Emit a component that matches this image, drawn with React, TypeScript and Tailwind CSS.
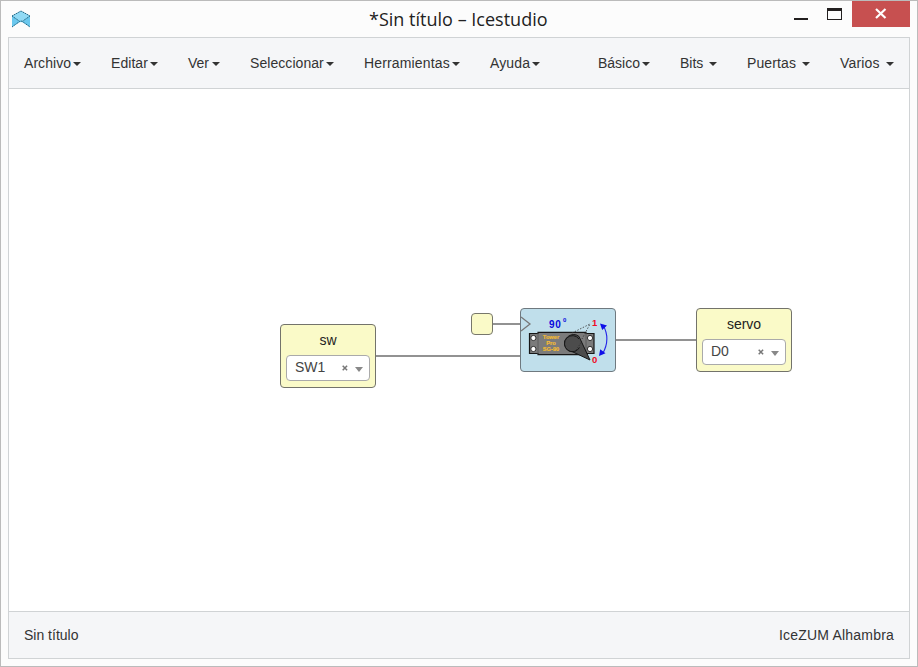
import React from "react";

type MenuEntry = { label: string; box: string; text: string };

const mainMenu: MenuEntry[] = [
  { label: "Archivo", box: "w-[57px]", text: "tracking-[0.05px]" },
  { label: "Editar", box: "w-[47px]", text: "tracking-[0.05px]" },
  { label: "Ver", box: "w-8", text: "tracking-normal" },
  { label: "Seleccionar", box: "w-[84px]", text: "tracking-[0.06px]" },
  { label: "Herramientas", box: "w-24", text: "tracking-[0.15px]" },
  { label: "Ayuda", box: "w-[50px]", text: "tracking-[0.12px]" },
];

const blockMenu: MenuEntry[] = [
  { label: "Básico", box: "w-[52px]", text: "tracking-normal" },
  { label: "Bits", box: "w-[37px]", text: "tracking-normal" },
  { label: "Puertas", box: "w-[63px]", text: "tracking-[0.12px]" },
  { label: "Varios", box: "w-[54px]", text: "tracking-[0.15px]" },
];

function Menu({ items }: { items: MenuEntry[] }) {
  return (
    <nav className="flex gap-[30px]">
      {items.map(({ label, box, text }) => (
        <button key={label} className={`flex h-5 items-center justify-between whitespace-nowrap ${box}`}>
          <span className={text}>{label}</span>
          <span className="mt-0.5 h-0 w-0 shrink-0 border-x-4 border-t-4 border-x-transparent border-t-[#333]" />
        </button>
      ))}
    </nav>
  );
}

function Logo() {
  return (
    <svg className="mt-[9px] h-[18px] w-5" viewBox="0 0 20 18">
      <path d="m1 6 9-5 9 5v11l-6.5-4q-2.5-2-5 0L1 17Z" fill="#79cef0" />
      <path d="m1 6 9-5 9 5-7.5 5h-3Z" fill="#91daf5" />
      <path d="M1 6v11l7-5.5ZM19 6v11l-7-5.5Z" fill="#6bc8ee" />
      <path d="m1 6 9-5 9 5M1 6l7.5 5.2M19 6l-7.5 5.2M1 17l7.5-5.5 1.5-.5 1.5.5L19 17" fill="none" stroke="#256784" strokeWidth="1" strokeDasharray="1.5 .6" />
    </svg>
  );
}

function TitleBar() {
  return (
    <header className="flex h-9 items-start pl-[10px] pr-[7px]">
      <div className="flex w-[358px]"><Logo /></div>
      <h1 className="mt-[5px] w-[180px] whitespace-nowrap font-['Open_Sans','Noto_Sans',sans-serif] text-[18px] leading-[26px] tracking-[0.01px] text-[#222]">
        *Sin título – Icestudio
      </h1>
      <div className="ml-auto flex">
        <button aria-label="Minimizar" className="mr-[19px] mt-[17px] h-0.5 w-[14px] bg-[#221f1f]" />
        <button aria-label="Maximizar" className="mr-[10px] mt-[7px] h-3 w-[15px] border border-t-[3px] border-[#221f1f]" />
        <button aria-label="Cerrar" className="flex h-[26px] w-[58px] justify-center bg-[#c75050]">
          <svg className="mt-[7px] h-[11px] w-[12px]" viewBox="0 0 12 11">
            <path d="m1 1 9.5 9M10.5 1 1 10" stroke="white" strokeWidth="2.2" />
          </svg>
        </button>
      </div>
    </header>
  );
}

function PinBlock({ name, pin, position }: { name: string; pin: string; position: string }) {
  return (
    <div className={`absolute flex h-16 w-24 flex-col items-center rounded-[4px] border border-[#73736b] bg-[#fafac8] ${position}`}>
      <span className="mt-[5px] h-5 leading-5 text-[#222]">{name}</span>
      <div className="mt-[5px] flex h-[26px] w-[84px] items-center rounded-[4px] border border-[#aaa] bg-white pl-2 text-[#444]">
        <span className="-mt-0.5">{pin}</span>
        <svg className="ml-auto h-1.5 w-1.5" viewBox="0 0 6 6"><path d="m.7.7 4.4 4.6M5.1.7.7 5.3" stroke="#777" strokeWidth="1.5" /></svg>
        <span className="ml-[7px] mr-1.5 mt-[3px] h-0 w-0 border-x-4 border-t-[5px] border-x-transparent border-t-[#888]" />
      </div>
    </div>
  );
}

function ServoBlock() {
  return (
    <div className="absolute left-[511px] top-[219px] h-16 w-24 rounded-[4px] border border-[#6f797f] bg-[#c0dfeb]">
      <svg className="h-full w-full" viewBox="1 1 94 62" fontFamily="Liberation Sans, Arial, sans-serif">
        <path d="m1 9 9 7-9 7" fill="none" stroke="#777" strokeWidth="1.3" />
        <text x="29" y="19.5" fontSize="10" fontWeight="700" letterSpacing=".6" fill="#0808dd">90</text>
        <text x="43" y="14" fontSize="6" fontWeight="700" fill="#0808dd">0</text>
        <path d="M9.5 25.5H18v-1.2h48v1.2h8v20h-8v1.2H18v-1.2H9.5Z" fill="#7b7b7b" stroke="#171717" strokeWidth="1.2" />
        <path d="M18 25v21M66 25v21" stroke="#555" strokeWidth=".8" />
        <g fill="white" stroke="#222" strokeWidth=".9">
          <circle cx="13.4" cy="30" r="2.6" /><circle cx="13.4" cy="41" r="2.6" />
          <circle cx="70" cy="30" r="2.6" /><circle cx="70" cy="41" r="2.6" />
        </g>
        <g fill="#f5bd32" stroke="#f5bd32" strokeWidth=".15" fontSize="5.7" fontWeight="700" textAnchor="middle">
          <text x="31" y="31">Tower</text><text x="31" y="37">Pro</text><text x="31" y="43">SG-90</text>
        </g>
        <path d="m52 25 18-9-8 15" fill="none" stroke="#333" strokeWidth=".8" strokeDasharray="1.5 1.5" />
        <path d="M59 28.5q-5-4-11 0-6 5-2 12 2 3 7 3.5L70 52Z" fill="#4c4c4c" stroke="#151515" strokeWidth="1" />
        <circle cx="52.5" cy="35.5" r="8" fill="#4c4c4c" />
        <path d="M59.5 39.5A8 8 0 1 1 59 31" fill="none" stroke="#181818" strokeWidth="1" />
        <path d="m55 44 7-11" stroke="#222" strokeWidth=".7" strokeDasharray="1 1.5" />
        <text x="72" y="18" fontSize="9.5" fontWeight="700" fill="#ef0b25">1</text>
        <text x="72" y="55" fontSize="9.5" fontWeight="700" fill="#ef0b25">0</text>
        <path d="M83 17q8 14-.5 29" fill="none" stroke="#2424e8" strokeWidth="1.1" />
        <path d="m80 15.5 7 2-4.8 4.5ZM79 48l1.2-6.8 5.3 4Z" fill="#1010e8" />
      </svg>
    </div>
  );
}

export default function App() {
  return (
    <div className="flex h-[667px] w-[918px] flex-col border border-[#bbb] bg-[#fcfcfc] font-['Liberation_Sans',Arial,sans-serif] text-[14px] text-[#333]">
      <TitleBar />
      <section className="ml-[7px] flex h-[622px] w-[902px] flex-col border border-[#d0d3d5] bg-white">
        <div className="flex h-[51px] shrink-0 items-center justify-between border-b border-[#d0d3d5] bg-[#f5f6f8] px-[15px]">
          <Menu items={mainMenu} />
          <Menu items={blockMenu} />
        </div>
        <main className="relative flex-1">
          <svg className="absolute inset-0 h-full w-full" viewBox="0 0 900 522">
            <path d="M483 235h28M367 267h144M607 251h80" fill="none" stroke="#929292" strokeWidth="2" />
          </svg>
          <div className="absolute left-[462px] top-[224px] h-[22px] w-[22px] rounded-[4px] border border-[#77776b] bg-[#fafac8]" />
          <PinBlock name="sw" pin="SW1" position="left-[271px] top-[235px]" />
          <ServoBlock />
          <PinBlock name="servo" pin="D0" position="left-[687px] top-[219px]" />
        </main>
        <footer className="flex h-[47px] shrink-0 items-center justify-between border-t border-[#d0d3d5] bg-[#f5f6f8] px-[15px]">
          <span>Sin título</span>
          <span className="tracking-[0.2px]">IceZUM Alhambra</span>
        </footer>
      </section>
    </div>
  );
}
